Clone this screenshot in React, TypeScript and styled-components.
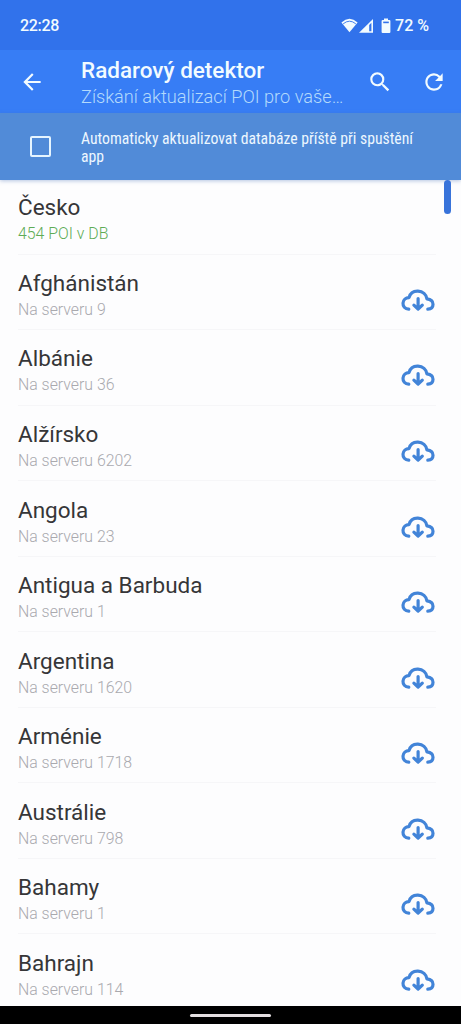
import React from "react";
import styled, { createGlobalStyle } from "styled-components";

const GlobalStyle = createGlobalStyle`
  * { box-sizing: border-box; }
  body { margin: 0; background: #fdfdfe; font-family: Roboto, "Liberation Sans", sans-serif; }
`;

const Screen = styled.div`
  width: 461px;
  height: 1024px;
  display: flex;
  flex-direction: column;
  overflow: hidden;
  background: #fdfdfe;
`;

const StatusBar = styled.div`
  height: 50px;
  flex: none;
  display: flex;
  align-items: center;
  padding: 1px 32px 0 20px;
  background: #3172eb;
  color: #f2fbff;
  font-size: 16px;
  font-weight: 500;
`;

const Clock = styled.span`
  flex: 1;
  letter-spacing: -0.3px;
`;

const StatusIcons = styled.svg`
  width: 51px;
  height: 18px;
  margin-right: 4px;
`;

const AppBar = styled.header`
  height: 63px;
  flex: none;
  display: flex;
  align-items: center;
  padding: 0 15px 0 19px;
  background: #377df5;
  color: #f2fbff;
`;

const BarIcon = styled.svg`
  width: 26px;
  height: 26px;
  flex: none;
  fill: currentColor;
`;

const Titles = styled.div`
  width: 276px;
  flex: none;
  margin: 0 10px 0 36px;
  padding-top: 3px;
  white-space: nowrap;
`;

const Title = styled.h1`
  margin: 0;
  font-size: 22.5px;
  line-height: 28px;
  font-weight: 500;
`;

const Subtitle = styled.div`
  font-size: 18.2px;
  font-weight: 300;
  line-height: 26px;
  color: #b4dafc;
`;

const Actions = styled.div`
  display: flex;
  gap: 28px;
`;

const Option = styled.label`
  height: 67px;
  flex: none;
  display: flex;
  align-items: center;
  padding-left: 30px;
  background: #518bd8;
  color: #edf7ff;
  box-shadow: 0 1px 4px rgba(70, 110, 180, 0.4);
`;

const CheckBox = styled.span`
  width: 21px;
  height: 21px;
  flex: none;
  border: 2px solid #e6f5ff;
  border-radius: 2px;
`;

const OptionText = styled.span`
  width: 350px;
  margin-left: 30px;
  padding-top: 3px;
  font-family: "Roboto Condensed", Roboto, sans-serif;
  font-stretch: 75%;
  font-size: 15.72px;
  line-height: 18.5px;
`;

const ListArea = styled.main`
  position: relative;
  flex: 1;
  min-height: 0;
  overflow: hidden;
  display: flex;
  flex-direction: column;
  margin-top: -1px;
`;

const Row = styled.div`
  height: 75.55px;
  flex: none;
  display: flex;
  justify-content: space-between;
  margin: 0 25px 0 18px;
  padding-top: 13.4px;
  border-bottom: 1px solid #f6f6f8;
`;

const Name = styled.div`
  font-size: 22.5px;
  line-height: 30px;
  color: #363638;
`;

const Detail = styled.div<{ $stored?: boolean }>`
  font-size: 15.85px;
  line-height: 23px;
  font-weight: 300;
  color: ${(p) => (p.$stored ? "#5eac55" : "#a9a9ae")};
`;

const CloudIcon = styled.svg`
  width: 37px;
  height: 27px;
  margin-top: 19px;
  fill: none;
  stroke: #4284d8;
  stroke-width: 3.2;
  stroke-linecap: round;
  stroke-linejoin: round;
`;

const ScrollThumb = styled.div`
  position: absolute;
  top: 1px;
  right: 10px;
  width: 7px;
  height: 34px;
  border-radius: 3.5px;
  background: #3873da;
`;

const NavBar = styled.footer`
  height: 18px;
  flex: none;
  display: flex;
  justify-content: center;
  padding-top: 8px;
  background: #000;
`;

const Handle = styled.div`
  width: 81px;
  height: 3px;
  border-radius: 1.5px;
  background: #e4dfe1;
`;

const countries: { name: string; detail: string; stored?: boolean }[] = [
  { name: "Česko", detail: "454 POI v DB", stored: true },
  { name: "Afghánistán", detail: "Na serveru 9" },
  { name: "Albánie", detail: "Na serveru 36" },
  { name: "Alžírsko", detail: "Na serveru 6202" },
  { name: "Angola", detail: "Na serveru 23" },
  { name: "Antigua a Barbuda", detail: "Na serveru 1" },
  { name: "Argentina", detail: "Na serveru 1620" },
  { name: "Arménie", detail: "Na serveru 1718" },
  { name: "Austrálie", detail: "Na serveru 798" },
  { name: "Bahamy", detail: "Na serveru 1" },
  { name: "Bahrajn", detail: "Na serveru 114" },
];

export default function App() {
  return (
    <Screen>
      <GlobalStyle />
      <StatusBar>
        <Clock>22:28</Clock>
        <StatusIcons viewBox="0 0 51 18" fill="#f2fbff">
          <path d="M1.4 5.4Q9.5 -1.8 17.6 5.4L9.5 15.2Z" />
          <path d="M3.2 6.8Q9.5 1.6 15.8 6.8" fill="none" stroke="#3172eb" strokeWidth="0.9" />
          <path d="M19 15.7L33 2V15.7Z" />
          <path d="M29.2 7.9L31.4 5.7V14.2H29.2Z" fill="#3172eb" />
          <path d="M44 1.5h4v1.4h1.4q1 0 1 1V15q0 1-1 1h-6.8q-1 0-1-1V3.9q0-1 1-1H44Z" />
          <path d="M43.2 4.6h5.6v1.6h-5.6Z" fill="#3172eb" />
        </StatusIcons>
        <span>72 %</span>
      </StatusBar>
      <AppBar>
        <BarIcon viewBox="0 0 24 24">
          <path d="M20 11H7.83l5.59-5.59L12 4l-8 8 8 8 1.41-1.41L7.83 13H20v-2z" />
        </BarIcon>
        <Titles>
          <Title>Radarový detektor</Title>
          <Subtitle>Získání aktualizací POI pro vaše…</Subtitle>
        </Titles>
        <Actions>
          <BarIcon viewBox="0 0 24 24">
            <path d="M15.5 14h-.79l-.28-.27A6.47 6.47 0 0 0 16 9.5 6.5 6.5 0 1 0 9.5 16c1.61 0 3.09-.59 4.23-1.57l.27.28v.79l5 4.99L20.49 19l-4.99-5zm-6 0C7.01 14 5 11.99 5 9.5S7.01 5 9.5 5 14 7.01 14 9.5 11.99 14 9.5 14z" />
          </BarIcon>
          <BarIcon viewBox="0 0 24 24">
            <path d="M17.65 6.35A7.958 7.958 0 0 0 12 4c-4.42 0-7.99 3.58-7.99 8s3.57 8 7.99 8c3.73 0 6.84-2.55 7.73-6h-2.08A5.99 5.99 0 0 1 12 18c-3.31 0-6-2.69-6-6s2.69-6 6-6c1.66 0 3.14.69 4.22 1.78L13 11h7V4l-2.35 2.35z" />
          </BarIcon>
        </Actions>
      </AppBar>
      <Option>
        <CheckBox />
        <OptionText>Automaticky aktualizovat databáze příště při spuštění app</OptionText>
      </Option>
      <ListArea>
        {countries.map((c) => (
          <Row key={c.name}>
            <div>
              <Name>{c.name}</Name>
              <Detail $stored={c.stored}>{c.detail}</Detail>
            </div>
            {!c.stored && (
              <CloudIcon viewBox="0 0 37 27">
                <path d="M9.8 22.2C5.8 22 3.8 19 4 16.2C4.2 12.8 6.8 10.6 10 10.6C11.2 6.4 14.8 4 19 4.2C23.8 4.4 27.2 7.6 27.9 11.8C31.6 12.2 34 14 34 17.2C34 20 32 22 28.8 22.2" />
                <path d="M19.1 11.5V22M14.9 18.1L19.1 22.2L23.3 18.1" />
              </CloudIcon>
            )}
          </Row>
        ))}
        <ScrollThumb />
      </ListArea>
      <NavBar>
        <Handle />
      </NavBar>
    </Screen>
  );
}
